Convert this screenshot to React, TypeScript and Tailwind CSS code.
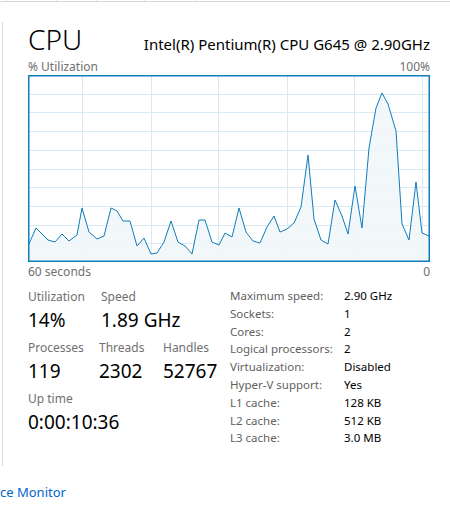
const POINTS: [number, number][] = [
  [0, 171], [8, 153], [20, 165], [27, 167], [34, 159], [41, 166], [49, 160], [54, 133],
  [61, 157], [69, 164], [76, 161], [83, 133], [89, 136], [95, 146], [102, 146], [109, 171],
  [116, 163], [123, 179], [129, 178], [136, 167], [143, 146], [150, 167], [157, 171], [164, 179],
  [171, 145], [177, 145], [184, 167], [191, 170], [197, 158], [204, 162], [211, 133], [218, 157],
  [225, 166], [232, 168], [239, 152], [246, 141], [252, 157], [259, 154], [266, 148], [273, 132],
  [280, 80], [286, 144], [293, 165], [300, 169], [307, 125], [314, 141], [320, 159], [327, 111],
  [334, 153], [341, 73], [348, 33], [354, 18], [360, 29], [368, 56], [374, 149], [381, 165],
  [388, 107], [394, 158], [401, 161],
];

const CHART_W = 402;
const CHART_H = 187;
const V_LINES = [54, 123, 190, 259, 326, 394];

const SPECS: [string, string][] = [
  ["Maximum speed:", "2.90 GHz"],
  ["Sockets:", "1"],
  ["Cores:", "2"],
  ["Logical processors:", "2"],
  ["Virtualization:", "Disabled"],
  ["Hyper-V support:", "Yes"],
  ["L1 cache:", "128 KB"],
  ["L2 cache:", "512 KB"],
  ["L3 cache:", "3.0 MB"],
];

function UtilizationChart() {
  const line = POINTS.map(([x, y]) => `${x},${y}`).join(" ");
  const area = `0,${CHART_H} ${line} ${CHART_W},${CHART_H}`;
  return (
    <svg width={CHART_W} height={CHART_H} className="block">
      {Array.from({ length: 9 }, (_, i) => {
        const y = Math.round(((i + 1) * CHART_H) / 10) + 0.5;
        return <line key={`h${i}`} x1={0} x2={CHART_W} y1={y} y2={y} stroke="#d9eaf4" />;
      })}
      {V_LINES.map((x) => (
        <line key={`v${x}`} x1={x + 0.5} x2={x + 0.5} y1={0} y2={CHART_H} stroke="#d9eaf4" />
      ))}
      <polygon points={area} fill="#f1f6fa" fillOpacity={0.9} />
      <polyline points={line} fill="none" stroke="#117dbb" strokeWidth={1} strokeLinejoin="round" />
      <rect x={0.75} y={0.75} width={CHART_W - 1.5} height={CHART_H - 1.5} fill="none" stroke="#117dbb" strokeWidth={1.5} />
    </svg>
  );
}

function Stat({ label, value, width }: { label: string; value: string; width: string }) {
  return (
    <div className={`flex flex-col ${width}`}>
      <span className="text-[12px] leading-[17px] text-[#707070]">{label}</span>
      <span className="mt-[2px] text-[19px] leading-[26px] text-black">{value}</span>
    </div>
  );
}

export default function App() {
  return (
    <div
      className="flex h-[516px] w-[450px] flex-col overflow-hidden bg-white"
      style={{ fontFamily: '"Noto Sans", "Open Sans", sans-serif' }}
    >
      <div className="flex h-[1px] w-full">
        <div className="w-[7px] border-r border-[#e2e2e2]" />
        <div className="w-[50px] border-r border-[#e2e2e2]" />
        <div className="w-[40px] border-r border-[#e2e2e2]" />
        <div className="w-[48px] border-r border-[#e2e2e2]" />
        <div className="w-[51px] border-r border-[#e2e2e2]" />
      </div>
      <div className="h-[1px] w-full bg-[#d6d6d6]" />

      <div className="ml-[2px] mt-[20px] flex h-[444px] w-[428px] flex-col border-l border-[#dedede] pl-[25px]">
        <div className="flex items-baseline justify-between">
          <h1 className="text-[28px] leading-[34px] font-light text-black">CPU</h1>
          <span className="text-[15px] leading-[20px] text-black">Intel(R) Pentium(R) CPU G645 @ 2.90GHz</span>
        </div>

        <div className="mt-[3px] flex justify-between text-[12px] leading-[16px] text-[#707070]">
          <span>% Utilization</span>
          <span>100%</span>
        </div>
        <UtilizationChart />
        <div className="mt-[2px] flex justify-between text-[12px] leading-[16px] text-[#707070]">
          <span>60 seconds</span>
          <span>0</span>
        </div>

        <div className="mt-[8px] flex">
          <div className="flex w-[202px] flex-col gap-[6px]">
            <div className="flex">
              <Stat label="Utilization" value="14%" width="w-[73px]" />
              <Stat label="Speed" value="1.89 GHz" width="w-[100px]" />
            </div>
            <div className="flex">
              <Stat label="Processes" value="119" width="w-[71px]" />
              <Stat label="Threads" value="2302" width="w-[64px]" />
              <Stat label="Handles" value="52767" width="w-[60px]" />
            </div>
            <Stat label="Up time" value="0:00:10:36" width="w-[120px]" />
          </div>

          <dl className="-mt-[1px] flex flex-col text-[11.5px] leading-[17.8px]">
            {SPECS.map(([k, v]) => (
              <div key={k} className="flex">
                <dt className="w-[114px] text-[#5f5f5f]">{k}</dt>
                <dd className="text-black">{v}</dd>
              </div>
            ))}
          </dl>
        </div>
      </div>

      <a className="mt-[18px] text-[13px] leading-[17px] text-[#0066cc]">ce Monitor</a>
    </div>
  );
}
